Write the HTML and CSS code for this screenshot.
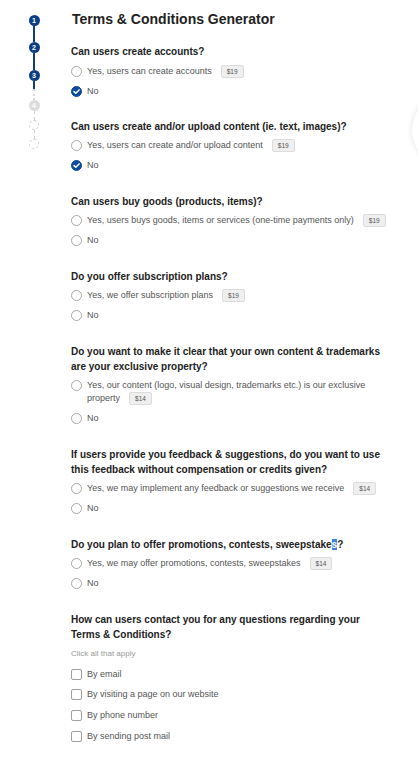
FILE: index.html
```html
<!DOCTYPE html>
<html>
<head>
<meta charset="utf-8">
<link rel="stylesheet" href="styles.css">
</head>
<body>
<div class="page">
  <aside class="stepper">
    <div class="step done">1</div>
    <div class="link l1"></div>
    <div class="step done">2</div>
    <div class="link l2"></div>
    <div class="step done">3</div>
    <div class="link l3"><span class="dark"></span><span class="dash"></span></div>
    <div class="step todo">4</div>
    <div class="link dotted l4"></div>
    <div class="step ghost"></div>
    <div class="link dotted l5"></div>
    <div class="step ghost"></div>
  </aside>
  <main class="content">
    <h1 class="title">Terms &amp; Conditions Generator</h1>

    <section class="q">
      <h2>Can users create accounts?</h2>
      <div class="opt"><span class="radio"></span><span class="label">Yes, users can create accounts<span class="badge">$19</span></span></div>
      <div class="opt"><span class="radio on"><svg viewBox="0 0 11 11"><path d="M3 5.6 L4.8 7.3 L8.1 3.9" fill="none" stroke="#fff" stroke-width="1.5" stroke-linecap="round" stroke-linejoin="round"/></svg></span><span class="label">No</span></div>
    </section>

    <section class="q">
      <h2>Can users create and/or upload content (ie. text, images)?</h2>
      <div class="opt"><span class="radio"></span><span class="label">Yes, users can create and/or upload content<span class="badge">$19</span></span></div>
      <div class="opt"><span class="radio on"><svg viewBox="0 0 11 11"><path d="M3 5.6 L4.8 7.3 L8.1 3.9" fill="none" stroke="#fff" stroke-width="1.5" stroke-linecap="round" stroke-linejoin="round"/></svg></span><span class="label">No</span></div>
    </section>

    <section class="q">
      <h2>Can users buy goods (products, items)?</h2>
      <div class="opt"><span class="radio"></span><span class="label">Yes, users buys goods, items or services (one-time payments only)<span class="badge">$19</span></span></div>
      <div class="opt"><span class="radio"></span><span class="label">No</span></div>
    </section>

    <section class="q">
      <h2>Do you offer subscription plans?</h2>
      <div class="opt"><span class="radio"></span><span class="label">Yes, we offer subscription plans<span class="badge">$19</span></span></div>
      <div class="opt"><span class="radio"></span><span class="label">No</span></div>
    </section>

    <section class="q">
      <h2>Do you want to make it clear that your own content &amp; trademarks are your exclusive property?</h2>
      <div class="opt"><span class="radio"></span><span class="label">Yes, our content (logo, visual design, trademarks etc.) is our exclusive property<span class="badge">$14</span></span></div>
      <div class="opt"><span class="radio"></span><span class="label">No</span></div>
    </section>

    <section class="q">
      <h2>If users provide you feedback &amp; suggestions, do you want to use this feedback without compensation or credits given?</h2>
      <div class="opt"><span class="radio"></span><span class="label">Yes, we may implement any feedback or suggestions we receive<span class="badge">$14</span></span></div>
      <div class="opt"><span class="radio"></span><span class="label">No</span></div>
    </section>

    <section class="q">
      <h2>Do you plan to offer promotions, contests, sweepstake<span class="sel">s</span>?</h2>
      <div class="opt"><span class="radio"></span><span class="label">Yes, we may offer promotions, contests, sweepstakes<span class="badge">$14</span></span></div>
      <div class="opt"><span class="radio"></span><span class="label">No</span></div>
    </section>

    <section class="q">
      <h2>How can users contact you for any questions regarding your Terms &amp; Conditions?</h2>
      <p class="hint">Click all that apply</p>
      <div class="opt cb"><span class="check"></span><span class="label">By email</span></div>
      <div class="opt cb"><span class="check"></span><span class="label">By visiting a page on our website</span></div>
      <div class="opt cb"><span class="check"></span><span class="label">By phone number</span></div>
      <div class="opt cb"><span class="check"></span><span class="label">By sending post mail</span></div>
    </section>
  </main>
</div>
<div class="edge"><div class="floater"></div></div>
</body>
</html>
```

FILE: styles.css
```css
html, body {
  margin: 0;
  padding: 0;
  background: #fff;
  overflow: hidden;
}
body {
  font-family: "Liberation Sans", Arial, sans-serif;
  color: #222;
  position: relative;
  width: 418px;
  height: 765px;
}
.page {
  display: flex;
  align-items: flex-start;
}
.stepper {
  width: 68px;
  flex: none;
  display: flex;
  flex-direction: column;
  align-items: center;
  padding-top: 14.5px;
}
.step {
  width: 11px;
  height: 11px;
  border-radius: 50%;
  box-sizing: border-box;
  font-size: 7px;
  font-weight: bold;
  line-height: 11px;
  text-align: center;
  color: #fff;
}
.step.done { background: #0d3d87; }
.step.todo { background: #dcdcdc; }
.step.ghost {
  width: 10px;
  height: 10px;
  border: 1px dashed #d0d0d0;
}
.link {
  width: 2px;
  background: #0d3d87;
}
.l1 { height: 16px; }
.l2 { height: 17.5px; }
.l3 {
  height: 18.5px;
  background: none;
  display: flex;
  flex-direction: column;
}
.l3 .dark { height: 8px; background: #0d3d87; }
.l3 .dash { flex: 1; border-left: 2px dotted #d8d8d8; }
.link.dotted {
  width: 0;
  background: none;
  border-left: 1px dashed #d0d0d0;
}
.l4 { height: 9px; }
.l5 { height: 9px; }

.content {
  flex: 1;
  padding-right: 30px;
  padding-left: 3px;
}
.title {
  margin: 11px 0 0 1px;
  font-size: 14px;
  line-height: 17px;
  font-weight: bold;
  color: #222;
}
.q {
  margin-top: 16px;
}
.q + .q {
  margin-top: 17.95px;
}
.q h2 {
  margin: 0 0 2px 0;
  font-size: 10px;
  line-height: 15px;
  font-weight: bold;
  color: #222;
}
.opt {
  display: flex;
  align-items: flex-start;
  padding: 3.5px 0;
  font-size: 9px;
  line-height: 13px;
  color: #555;
}
.opt.cb {
  padding: 3.8px 0;
}
.radio, .check {
  flex: none;
  width: 11px;
  height: 11px;
  box-sizing: border-box;
  margin: 1px 5px 0 0;
  background: #fff;
  border: 1px solid #a8a8a8;
}
.radio { border-radius: 50%; }
.radio.on {
  background: #0b4a9e;
  border-color: #0b4a9e;
  position: relative;
}
.radio.on svg {
  position: absolute;
  left: -1px;
  top: -1px;
  width: 11px;
  height: 11px;
}
.check { border-radius: 2px; border-color: #a0a0a0; }
.label { flex: 1; }
.badge {
  display: inline-block;
  margin-left: 9px;
  padding: 0 5px;
  height: 11px;
  line-height: 11px;
  font-size: 6.5px;
  color: #555;
  background: #efefef;
  border: 1px solid #dcdcdc;
  border-radius: 2px;
  vertical-align: 0;
}
.hint {
  margin: 0;
  font-size: 8px;
  line-height: 19px;
  color: #999;
  padding-bottom: 1.5px;
}
.sel {
  background: #3a84e0;
  color: #fff;
}
.edge {
  position: absolute;
  left: 408px;
  top: 88px;
  width: 10px;
  height: 84px;
  overflow: hidden;
}
.floater {
  margin: 7px 0 0 4px;
  width: 70px;
  height: 70px;
  border-radius: 50%;
  background: #fff;
  box-shadow: 0 0 6px rgba(0, 0, 0, 0.12);
}
```
